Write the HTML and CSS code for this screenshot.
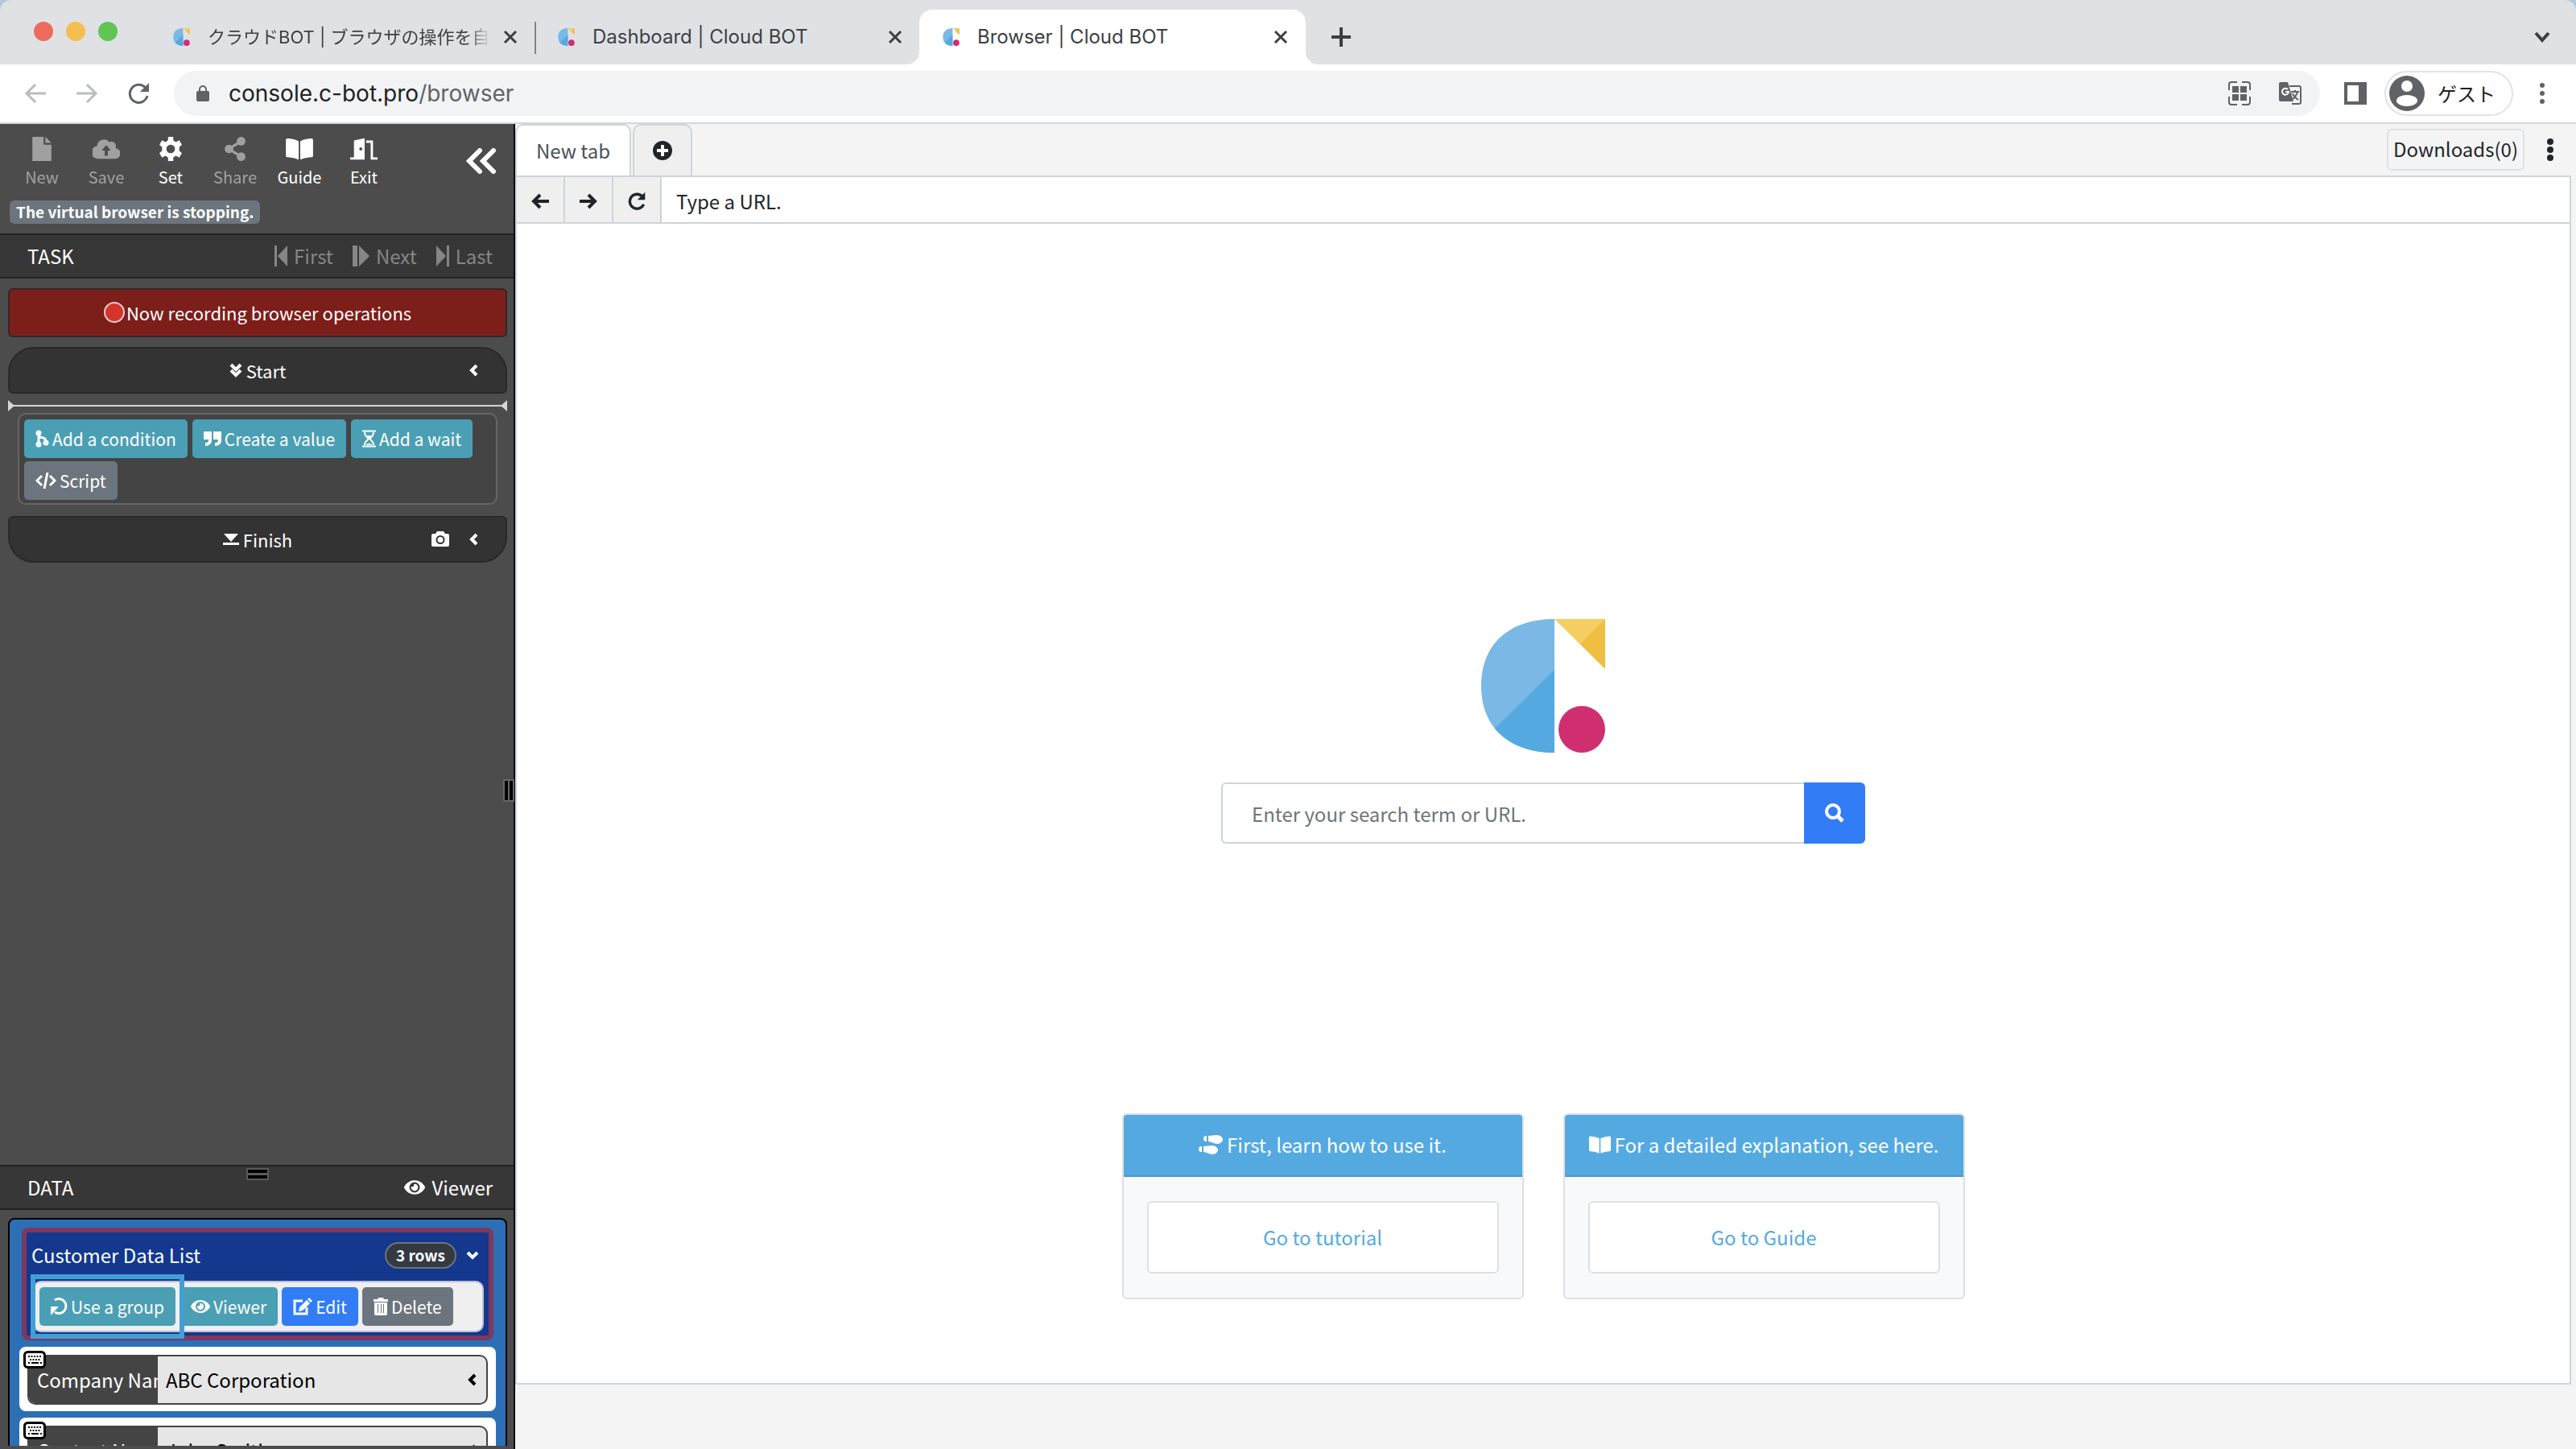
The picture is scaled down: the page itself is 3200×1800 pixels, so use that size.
FILE: index.html
```html
<!DOCTYPE html>
<html lang="en">
<head>
<meta charset="utf-8">
<title>Browser | Cloud BOT</title>
<link rel="stylesheet" href="styles.css">
</head>
<body>
<svg class="defs" aria-hidden="true">
  <symbol id="logo" viewBox="0 0 154 166">
    <path d="M91 0C36 0 0 30 0 83s36 83 91 83z" fill="#7ab8e5"/>
    <path d="M91 63 17 136c17 20 42 30 74 30z" fill="#54aae0"/>
    <path d="M91 0h63v62z" fill="#f4ce62"/>
    <path d="M154 0v62l-31-31z" fill="#f0bf42"/>
    <circle cx="125" cy="137" r="29" fill="#cf2e6f"/>
  </symbol>
  <symbol id="x" viewBox="0 0 18 18"><path d="M2 2l14 14M16 2 2 16" stroke="currentColor" stroke-width="3" fill="none"/></symbol>
  <symbol id="left" viewBox="0 0 12 16"><path d="M10 2 4 8l6 6" stroke="currentColor" stroke-width="4" fill="none"/></symbol>
  <symbol id="down" viewBox="0 0 16 12"><path d="m2 3 6 6 6-6" stroke="currentColor" stroke-width="4" fill="none"/></symbol>
  <symbol id="book" viewBox="0 0 576 512"><path d="M542.2 32.100c-54.800 3.100-163.700 14.400-231 55.600-4.600 2.800-7.200 7.900-7.200 13.200v363.900c0 11.600 12.600 18.900 23.300 13.500 69.200-34.800 169.200-44.300 218.700-46.900 16.900-.9 30-14.400 30-30.700V62.800c0-17.700-15.400-31.800-33.800-30.700zM264.700 87.600C197.500 46.500 88.600 35.200 33.800 32.100 15.400 31 0 45 0 62.800V400.600c0 16.200 13.100 29.800 30 30.700 49.500 2.600 149.600 12.100 218.800 46.900 10.600 5.400 23.200-1.900 23.200-13.500V100.600c0-5.300-2.600-10.100-7.300-13z" fill="currentColor"/></symbol>
  <symbol id="eye" viewBox="0 0 576 512"><path fill-rule="evenodd" d="M572.500 241.400C518.300 135.600 410.900 64 288 64S57.700 135.600 3.500 241.400a32.400 32.400 0 0 0 0 29.200C57.700 376.400 165.100 448 288 448s230.300-71.600 284.500-177.400a32.400 32.400 0 0 0 0-29.200zM288 400a144 144 0 1 1 144-144 143.900 143.900 0 0 1-144 144zm0-240a95.300 95.300 0 0 0-25.300 3.800 47.900 47.900 0 0 1-66.900 66.900A95.800 95.800 0 1 0 288 160z" fill="currentColor"/></symbol>
  <symbol id="redo" viewBox="0 0 28 28"><path d="M22.500 7.500A10.500 10.500 0 1 0 24 18.500" stroke="currentColor" stroke-width="4" fill="none"/><path d="M26 1v11H15z" fill="currentColor"/></symbol>
  <symbol id="keys" viewBox="0 0 28 22"><rect x="1.500" y="1.500" width="25" height="19" rx="4" fill="#fff" stroke="#000" stroke-width="3"/><path d="M6 7h17M8 11h13" stroke="#000" stroke-width="2" stroke-dasharray="2 1.500"/><path d="M6 15h2M10 15h9M21 15h2" stroke="#000" stroke-width="2"/></symbol>
</svg>

<header class="chrome">
  <div class="tabstrip">
    <div class="lights"><i class="red"></i><i class="yellow"></i><i class="green"></i></div>
    <div class="btab first"><svg class="fav"><use href="#logo"/></svg><span class="fade">クラウドBOT | ブラウザの操作を自動化</span><button aria-label="Close tab"><svg class="x"><use href="#x"/></svg></button></div>
    <div class="btab"><svg class="fav"><use href="#logo"/></svg><span>Dashboard | Cloud BOT</span><button aria-label="Close tab"><svg class="x"><use href="#x"/></svg></button></div>
    <div class="btab active"><svg class="fav"><use href="#logo"/></svg><span>Browser | Cloud BOT</span><button aria-label="Close tab"><svg class="x"><use href="#x"/></svg></button></div>
    <button class="plus" aria-label="New tab"><svg width="24" height="24"><path d="M12 0v24M0 12h24" stroke="#3c4043" stroke-width="4"/></svg></button>
    <button class="more" aria-label="Search tabs"><svg width="20" height="14"><path d="m2 2 8 9 8-9" stroke="#3c4043" stroke-width="4" fill="none"/></svg></button>
  </div>
  <div class="toolbar">
    <button aria-label="Back"><svg width="28" height="26" class="dim"><path d="M27 13H3M14 2 3 13l11 11" stroke="currentColor" stroke-width="3" fill="none"/></svg></button>
    <button aria-label="Forward"><svg width="28" height="26" class="dim"><path d="M1 13h24M14 2l11 11-11 11" stroke="currentColor" stroke-width="3" fill="none"/></svg></button>
    <button aria-label="Reload"><svg width="28" height="28"><path d="M22.500 7A11 11 0 1 0 25 17" stroke="currentColor" stroke-width="3" fill="none"/><path d="M27 1v11H16z" fill="currentColor"/></svg></button>
    <div class="address">
      <svg width="16" height="22"><path d="M4 9V6a4 4 0 0 1 8 0v3" stroke="currentColor" stroke-width="2" fill="none"/><rect y="8" width="16" height="13" rx="2" fill="currentColor"/></svg>
      <span class="url">console.c-bot.pro<em>/browser</em></span>
      <svg width="28" height="30" viewBox="0 0 28 30"><path d="M1 11V4a3 3 0 0 1 3-3h7M17 1h7a3 3 0 0 1 3 3v7M27 19v7a3 3 0 0 1-3 3h-7M11 29H4a3 3 0 0 1-3-3v-7" stroke="currentColor" stroke-width="2" fill="none"/><path d="M5 6h8v8H5zM15 6h8v8h-8zM5 16h8v8H5zM15 16h8v8h-8z" fill="currentColor"/></svg>
      <svg width="28" height="28" viewBox="0 0 28 28"><path d="M13 5h12a2 2 0 0 1 2 2v18a2 2 0 0 1-2 2h-9" fill="none" stroke="currentColor" stroke-width="2"/><path d="M2 0h9l7 24H2a2 2 0 0 1-2-2V2a2 2 0 0 1 2-2z" fill="currentColor"/><path d="M11 9a4 4 0 1 0 1 3H8" stroke="#fff" stroke-width="2" fill="none"/><path d="M15 12h10M20 10v2M23 12c-1 4-4 8-6 9M17 14c1 4 4 6 7 8" stroke="currentColor" stroke-width="2" fill="none"/></svg>
    </div>
    <button aria-label="Side panel"><svg width="28" height="28"><path d="M0 0h28v28H0zM4 4v20h14V4z" fill="currentColor" fill-rule="evenodd"/></svg></button>
    <button class="profile"><svg width="44" height="44"><circle cx="22" cy="22" r="22" fill="currentColor"/><circle cx="22" cy="13" r="7" fill="#fff"/><ellipse cx="22" cy="31" rx="13" ry="7" fill="#fff"/></svg>ゲスト</button>
    <button class="dots" aria-label="Menu"><svg width="6" height="26"><circle cx="3" cy="3" r="3"/><circle cx="3" cy="13" r="3"/><circle cx="3" cy="23" r="3"/></svg></button>
  </div>
</header>

<div class="app">
  <aside class="side">
    <div class="tools">
      <button disabled><svg viewBox="0 0 24 28"><path d="M1 0h13v9h9v19H1zM16 0l7 7h-7z" fill="currentColor"/></svg>New</button>
      <button disabled><svg viewBox="0 0 36 28"><path fill-rule="evenodd" d="M30 13a6 6 0 0 0-8-8A9 9 0 0 0 6 10a8 8 0 0 0 2 17h21a7 7 0 0 0 1-14zM24 16h-4v7h-4v-7h-4l6-7z" fill="currentColor"/></svg>Save</button>
      <button><svg viewBox="0 0 28 28"><path d="M11 0h6v4l3 2 4-2 3 5-3 3v4l3 3-3 5-4-2-3 2v4h-6v-4l-3-2-4 2-3-5 3-3v-4L1 9l3-5 4 2 3-2zM14 9a5 5 0 1 0 0 10 5 5 0 0 0 0-10z" fill="currentColor" fill-rule="evenodd"/></svg>Set</button>
      <button disabled><svg viewBox="0 0 26 28"><path d="M20 5 6 14l14 9" stroke="currentColor" stroke-width="3" fill="none"/><g fill="currentColor"><circle cx="20" cy="5" r="5"/><circle cx="6" cy="14" r="5"/><circle cx="20" cy="23" r="5"/></g></svg>Share</button>
      <button><svg><use href="#book"/></svg>Guide</button>
      <button><svg viewBox="0 0 36 28"><path fill-rule="evenodd" d="M0 25h5V3l14-3v28H0zM14 12a2 2 0 1 0 0 4 2 2 0 0 0 0-4zM21 3h9v22h6v3h-9V6h-6z" fill="currentColor"/></svg>Exit</button>
      <button class="collapse" aria-label="Collapse"><svg viewBox="0 0 40 32"><path d="M18 3 5 16l13 13M35 3 22 16l13 13" stroke="currentColor" stroke-width="6" fill="none" stroke-linecap="round"/></svg></button>
    </div>
    <div class="status"><span>The virtual browser is stopping.</span></div>
    <div class="bar">
      <h2>TASK</h2>
      <button disabled><svg width="16" height="26"><path d="M0 0h3v26H0zM16 0v26L4 13z" fill="currentColor"/></svg>First</button>
      <button disabled><svg width="21" height="26"><path d="M0 0h6v26H0zM8 0l13 13L8 26z" fill="currentColor"/></svg>Next</button>
      <button disabled><svg width="16" height="26"><path d="M13 0h3v26h-3zM0 0l12 13L0 26z" fill="currentColor"/></svg>Last</button>
    </div>
    <div class="task">
      <div class="rec"><i></i>Now recording browser operations</div>
      <div class="step start"><svg width="16" height="18"><path d="m2 2 6 6 6-6M2 9l6 6 6-6" stroke="currentColor" stroke-width="4" fill="none"/></svg>Start<span class="ends"><svg width="12" height="16"><use href="#left"/></svg></span></div>
      <div class="insert"></div>
      <div class="adders">
        <button class="teal"><svg width="17" height="22"><g fill="none" stroke="currentColor" stroke-width="3"><circle cx="4" cy="4" r="2"/><circle cx="4" cy="18" r="2"/><circle cx="13" cy="16" r="2"/><path d="M4 6v10M4 9c5 0 9 1 9 5"/></g></svg>Add a condition</button>
        <button class="teal"><svg width="22" height="20"><path d="M0 1h10v11c0 4-3 7-8 7v-4c3 0 4-1 4-4H0zM12 1h10v11c0 4-3 7-8 7v-4c3 0 4-1 4-4h-6z" fill="currentColor"/></svg>Create a value</button>
        <button class="teal"><svg width="17" height="22"><path d="M0 1.500h17M0 20.500h17M3 3c0 5 3 6 5 8-2 2-5 3-5 8M14 3c0 5-3 6-5 8 2 2 5 3 5 8" stroke="currentColor" stroke-width="2" fill="none"/><path d="M4 7h9l-4 4zM5 19c0-3 7-3 7 0z" fill="currentColor"/></svg>Add a wait</button>
        <button class="gray"><svg width="26" height="22"><path d="m8 5-6 6 6 6M18 5l6 6-6 6M15 1l-4 20" stroke="currentColor" stroke-width="3" fill="none"/></svg>Script</button>
      </div>
      <div class="step finish"><svg width="20" height="16"><path d="M1 1h18l-9 10zM0 12h20v3H0z" fill="currentColor"/></svg>Finish<span class="ends"><svg width="22" height="20"><path fill-rule="evenodd" d="M7 0h8l2 3h3a2 2 0 0 1 2 2v12a2 2 0 0 1-2 2H2a2 2 0 0 1-2-2V5a2 2 0 0 1 2-2h3zM11 5a5 5 0 1 0 0 11 5 5 0 0 0 0-11zM11 7a3 3 0 1 1 0 7 3 3 0 0 1 0-7z" fill="currentColor"/></svg><svg width="12" height="16"><use href="#left"/></svg></span></div>
    </div>
    <i class="grip-v"></i>
    <div class="bar data"><i class="grip-h"></i><h2>DATA</h2><button><svg width="26" height="24"><use href="#eye"/></svg>Viewer</button></div>
    <div class="datawrap">
      <div class="group">
        <section class="card">
          <div class="title"><span>Customer Data List</span><b>3 rows</b><svg width="16" height="12"><use href="#down"/></svg></div>
          <div class="actions">
            <span class="hl"><button class="teal"><svg width="21" height="22"><path d="M5 3a9 9 0 1 1 0 15" stroke="currentColor" stroke-width="3" fill="none"/><path d="M0 11h10L0 22z" fill="currentColor"/></svg>Use a group</button></span>
            <button class="teal"><svg width="24" height="22"><use href="#eye"/></svg>Viewer</button>
            <button class="blue"><svg width="24" height="22"><path d="M12 4H2v16h15v-8" stroke="currentColor" stroke-width="3" fill="none"/><path d="m17 3 4 4-9 9-5 1 1-5zM18 2l2-2 4 4-2 2z" fill="currentColor"/></svg>Edit</button>
            <button class="gray"><svg width="18" height="22"><path fill-rule="evenodd" d="M0 2h5l1-2h6l1 2h5v3H0zM1 6h16v14a2 2 0 0 1-2 2H3a2 2 0 0 1-2-2zM5 8v11h1V8zM9 8v11h1V8zM12 8v11h1V8z" fill="currentColor"/></svg>Delete</button>
          </div>
        </section>
        <div class="row"><svg class="keys"><use href="#keys"/></svg><div class="field"><label for="f1">Company Name</label><input id="f1" value="ABC Corporation"><svg width="12" height="16"><use href="#left"/></svg></div></div>
        <div class="row"><svg class="keys"><use href="#keys"/></svg><div class="field"><label for="f2">Contact Name</label><input id="f2" value="John Smith"><svg width="12" height="16"><use href="#left"/></svg></div></div>
      </div>
    </div>
  </aside>

  <main class="main">
    <div class="vtabs">
      <button class="vtab on">New tab</button>
      <button class="vtab add" aria-label="Add tab"><svg width="24" height="24"><circle cx="12" cy="12" r="12" fill="#212529"/><path d="M12 5v14M5 12h14" stroke="#fff" stroke-width="4"/></svg></button>
      <button class="dl">Downloads(0)</button>
      <button class="vdots" aria-label="Options"><svg width="8" height="28"><circle cx="4" cy="4" r="4"/><circle cx="4" cy="14" r="4"/><circle cx="4" cy="24" r="4"/></svg></button>
    </div>
    <div class="view">
      <div class="nav">
        <button aria-label="Back"><svg width="22" height="20"><path d="M22 10H4M11 2l-8 8 8 8" stroke="#212529" stroke-width="4" fill="none"/></svg></button>
        <button aria-label="Forward"><svg width="22" height="20"><path d="M0 10h18M11 2l8 8-8 8" stroke="#212529" stroke-width="4" fill="none"/></svg></button>
        <button aria-label="Reload"><svg width="24" height="24" color="#212529"><use href="#redo"/></svg></button>
        <input aria-label="URL" placeholder="Type a URL.">
      </div>
      <div class="page">
        <svg class="biglogo"><use href="#logo"/></svg>
        <form class="search"><input aria-label="Search" placeholder="Enter your search term or URL."><button type="button" aria-label="Search"><svg width="24" height="24"><circle cx="10" cy="10" r="8" stroke="#fff" stroke-width="4" fill="none"/><path d="m15 15 7 7" stroke="#fff" stroke-width="5"/></svg></button></form>
        <div class="cards">
          <section><h3><svg width="30" height="24"><g id="shoe" fill="currentColor"><path d="M10 1v7H9C5 8 5 1 9 1zM12 1c4 0 6-1 10-1 5 0 8 3 8 5.500S27 11 23 11c-4 0-7-3-11-3z"/></g><path d="M4 14v7H3c-4 0-4-7 0-7zM6 14c4 0 6-1 10-1 5 0 8 3 8 5.500S21 24 17 24c-4 0-7-3-11-3z" fill="currentColor"/></svg>First, learn how to use it.</h3><div><a href="#tutorial">Go to tutorial</a></div></section>
          <section><h3><svg width="27" height="24"><use href="#book"/></svg>For a detailed explanation, see here.</h3><div><a href="#guide">Go to Guide</a></div></section>
        </div>
      </div>
    </div>
  </main>
</div>
</body>
</html>
```
FILE: styles.css
```css
* { box-sizing: border-box; }
body { margin: 0; height: 100vh; display: flex; flex-direction: column; overflow: hidden; background: #f4f4f4; color: #212529; font: 24px/36px "Noto Sans CJK JP", sans-serif; }
button, input { font: inherit; color: inherit; border: 0; padding: 0; margin: 0; background: none; }
button { display: flex; align-items: center; justify-content: center; white-space: nowrap; }
svg { flex: none; display: block; }
h2, h3 { margin: 0; font: inherit; }
.defs { position: absolute; width: 0; height: 0; }

/* browser window */
.chrome { background: #b4c6dc; }
.tabstrip { height: 80px; border-radius: 14px 14px 0 0; background: #dfe1e5; display: flex; align-items: flex-end; color: #3c4043; font: 24px/36px Inter, "Noto Sans CJK JP", sans-serif; }
.lights { width: 186px; height: 80px; padding: 27px 0 0 42px; display: flex; gap: 16px; }
.lights i { width: 24px; height: 24px; border-radius: 50%; }
.red { background: #ed6a5e; }
.yellow { background: #f5bf4f; }
.green { background: #61c554; }
.btab { width: 478px; height: 68px; padding: 0 21px 0 29px; display: flex; align-items: center; gap: 22px; position: relative; }
.btab.first::after { content: ""; position: absolute; right: -2px; top: 15px; width: 2px; height: 40px; background: #80868b; }
.btab span { flex: 1; white-space: nowrap; overflow: hidden; }
.btab .fade { font-size: 22px; mask-image: linear-gradient(90deg, #000 92%, transparent); margin-right: -6px; }
.fav { width: 21px; height: 22px; }
.x { width: 18px; height: 18px; }
.btab.active { width: 480px; padding-right: 22px; background: #fff; border-radius: 16px 16px 0 0; }
.active::before, .active::after { content: ""; position: absolute; bottom: 0; width: 16px; height: 16px; }
.active::before { left: -16px; background: radial-gradient(circle at 0 0, transparent 16px, #fff 16px); }
.active::after { right: -16px; background: radial-gradient(circle at 100% 0, transparent 16px, #fff 16px); }
.plus { width: 88px; height: 68px; }
.more { margin-left: auto; width: 84px; height: 68px; }
.toolbar { height: 74px; background: #fff; border-bottom: 2px solid #d6d7da; padding: 0 39px 0 30px; display: flex; align-items: center; color: #5f6368; }
.toolbar > button { margin-right: 36px; }
.dim { color: #babcbe; }
.address { flex: 1; height: 56px; border-radius: 28px; background: #f1f3f4; display: flex; align-items: center; gap: 35px; padding: 0 23px 0 28px; margin: 0 30px 0 -6px; }
.url { flex: 1; margin-left: -11px; font: 28px/40px Inter, sans-serif; color: #202124; }
.url em { font-style: normal; color: #5f6368; }
.toolbar > .address + button { margin-right: 22px; }
.toolbar > .profile { width: 160px; height: 56px; border: 2px solid #e2e3e5; border-radius: 28px; gap: 16px; justify-content: flex-start; padding-left: 4px; margin-right: 33px; color: #202124; }
.profile svg { color: #5f6368; }
.toolbar > .dots { margin: 0; fill: #5f6368; }

.app { flex: 1; min-height: 0; display: flex; }

/* sidebar */
.side { width: 640px; flex: none; background: #4c4c4c; border-right: 2px solid #000; color: #fff; display: flex; flex-direction: column; position: relative; padding-bottom: 4px; }
.tools { display: flex; padding: 16px 20px 0 12px; height: 90px; }
.tools button { width: 80px; flex-direction: column; justify-content: flex-start; gap: 4px; font-size: 20px; line-height: 32px; }
.tools button svg { width: 34px; height: 30px; }
.tools button:disabled { color: #a0a0a0; }
.tools .collapse { margin-left: auto; width: 40px; padding-top: 14px; }
.tools .collapse svg { width: 40px; height: 32px; }
.status { height: 46px; padding: 5px 12px; display: flex; }
.status span { height: 29px; padding: 0 8px; border-radius: 6px; background: #6c757d; font-size: 19px; line-height: 28px; font-weight: 700; }
.bar { flex: none; height: 56px; background: #373737; border: solid #232323; border-width: 2px 0; display: flex; align-items: center; padding: 0 26px 0 34px; gap: 24px; position: relative; }
.bar h2 { flex: 1; }
.bar button { gap: 8px; }
.bar button:disabled { color: #868686; }
.task { flex: 1; min-height: 0; padding: 12px 8px 0 10px; }
.rec { height: 61px; border: 2px solid #352625; border-radius: 6px; background: #7c1e1a; display: flex; align-items: center; justify-content: center; gap: 2px; font-size: 22px; padding-bottom: 2px; }
.rec i { width: 26px; height: 26px; border-radius: 50%; background: #d5342c; border: 2px solid #ecc; }
.step { height: 58px; background: #333; border: 2px solid #292929; display: flex; align-items: center; justify-content: center; gap: 5px; position: relative; font-size: 22px; }
.start { margin-top: 12px; border-radius: 32px 32px 6px 6px; }
.finish { margin-top: 14px; border-radius: 6px 6px 32px 32px; }
.ends { position: absolute; right: 34px; display: flex; gap: 24px; align-items: center; }
.insert { height: 2px; margin-top: 14px; background: #d5d5d5; position: relative; }
.insert::before, .insert::after { content: ""; position: absolute; top: -6px; border: solid transparent; border-width: 7px 0; }
.insert::before { left: 0; border-left: 8px solid #d5d5d5; }
.insert::after { right: 0; border-right: 8px solid #d5d5d5; }
.adders { margin: 8px 12px 0; padding: 6px 6px 4px; border: 2px solid #666; border-radius: 10px; background: #444; display: flex; flex-wrap: wrap; gap: 4px 6px; }
.teal, .gray, .blue { height: 48px; padding: 0 14px; border-radius: 5px; gap: 4px; font-size: 21px; color: #fff; }
.teal { background: #4b9fb5; }
.gray { background: #6c757d; }
.blue { background: #327cf6; }
.grip-v { position: absolute; right: 1px; top: 816px; width: 10px; height: 24px; border: solid #000; border-width: 0 4px; background: #666; outline: 2px solid #666; }
.grip-h { position: absolute; left: 308px; top: 4px; width: 24px; height: 11px; border: solid #000; border-width: 4px 0; background: #5a5a5a; outline: 2px solid #5a5a5a; }
.datawrap { height: 293px; padding: 10px 8px 0 10px; overflow: hidden; }
.group { border: 2px solid #000; border-radius: 8px; background: #2d6fb5; padding: 10px 12px 40px; }
.card { margin: 0 3px; border: 6px solid #7c3960; border-radius: 8px; background: #13388d; padding: 0 6px 4px; }
.title { height: 60px; padding-bottom: 4px; display: flex; align-items: center; padding-right: 6px; }
.title span { flex: 1; }
.title b { font-weight: 700; font-size: 19px; line-height: 28px; height: 33px; padding: 0 12px; border: 2px solid #6c757d; border-radius: 17px; background: #343a40; margin-right: 12px; }
.actions { height: 64px; margin-left: 2px; border: 2px solid #b9c0dc; border-radius: 10px; background: #efefef; display: flex; align-items: center; gap: 5px; padding-left: 6px; }
.hl { position: relative; }
.hl::after { content: ""; position: absolute; inset: -16px -11px; border: 6px solid #419fd4; }
.row { height: 80px; margin-top: 8px; background: #fff; border-radius: 8px; padding: 10px; position: relative; }
.keys { position: absolute; left: 5px; top: 5px; width: 28px; height: 22px; }
.field { height: 62px; border: 2px solid #444; border-radius: 10px; background: #e6e6e6; display: flex; align-items: center; overflow: hidden; padding-right: 12px; color: #000; }
.field label { width: 160px; line-height: 60px; padding-left: 10px; background: #444; color: #fff; white-space: nowrap; overflow: hidden; }
.field input { flex: 1; min-width: 0; padding-left: 10px; }

/* virtual browser */
.main { flex: 1; min-width: 0; display: flex; flex-direction: column; padding: 0 6px 80px 0; }
.vtabs { height: 64px; display: flex; align-items: center; gap: 2px; }
.vtab { height: 64px; border: 2px solid #ced4da; border-bottom: 0; border-radius: 10px 10px 0 0; background: #efefef; }
.vtab.on { width: 144px; background: #fff; color: #495057; }
.vtab.add { width: 74px; }
.dl { margin-left: auto; width: 171px; height: 52px; border: 2px solid #dee2e6; border-radius: 6px; padding-bottom: 3px; }
.vdots { width: 56px; height: 64px; fill: #212529; padding-left: 4px; }
.view { flex: 1; min-height: 0; display: flex; flex-direction: column; background: #fff; border: 2px solid #ced4da; }
.nav { height: 58px; border-bottom: 2px solid #ced4da; display: flex; }
.nav button { width: 60px; padding-top: 3px; background: #efefef; border-right: 2px solid #ced4da; }
.nav input { flex: 1; padding: 3px 0 0 18px; }
.nav input::placeholder { color: #212529; opacity: 1; }
.page { flex: 1; display: flex; flex-direction: column; align-items: center; padding-top: 491px; }
.biglogo { width: 154px; height: 166px; }
.search { width: 800px; height: 76px; margin-top: 37px; display: flex; }
.search input { flex: 1; border: 2px solid #ced4da; border-right: 0; border-radius: 6px 0 0 6px; padding: 2px 0 0 36px; }
.search input::placeholder { color: #6c757d; opacity: 1; }
.search button { width: 76px; background: #327cf6; border-radius: 0 6px 6px 0; }
.cards { display: flex; gap: 49px; margin-top: 335px; }
.cards section { width: 499px; border: 2px solid #dfe0e2; border-radius: 6px; background: #f8f9fb; overflow: hidden; }
.cards h3 { height: 77px; padding-bottom: 2px; background: #54aae0; border-bottom: 2px solid #4699c9; color: #fff; display: flex; align-items: center; justify-content: center; gap: 5px; white-space: nowrap; }
.cards div { padding: 30px 29px; }
.cards a { display: block; height: 90px; line-height: 86px; border: 2px solid #dfe0e2; border-radius: 6px; background: #fff; text-align: center; color: #54aae0; text-decoration: none; }
```
